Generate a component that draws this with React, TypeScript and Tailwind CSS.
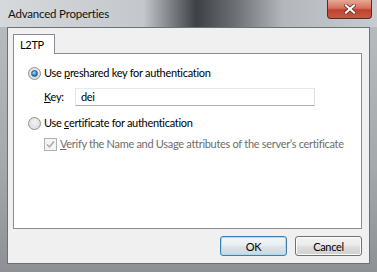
import React from 'react';

const font = { fontFamily: 'Lato, "Noto Sans", sans-serif' };

const Radio: React.FC<{ checked?: boolean }> = ({ checked }) => (
  <span className="w-[13px] h-[13px] rounded-full border border-[#8e8f8f] bg-[radial-gradient(circle_at_50%_40%,#f4f4f4,#d4d4d4)] flex items-center justify-center shrink-0">
    {checked && (
      <span className="w-[7px] h-[7px] rounded-full bg-[radial-gradient(circle_at_40%_35%,#a9dcf6,#2a7fc0_60%,#1b4f86)] border border-[#1e5c94]" />
    )}
  </span>
);

const Checkbox: React.FC = () => (
  <span className="w-[13px] h-[13px] border border-[#b1b1b1] bg-[#f4f4f4] flex items-center justify-center shrink-0">
    <svg width="9" height="9" viewBox="0 0 9 9">
      <path d="M1 4.5 L3.5 7 L8 1.5" fill="none" stroke="#a6a6a6" strokeWidth="1.4" />
    </svg>
  </span>
);

export default function App() {
  return (
    <div
      className="w-[377px] h-[272px] flex flex-col text-[11px] tracking-[-0.3px] text-black bg-[linear-gradient(180deg,#b9bec3_0%,#a4a9ae_60%,#8d9196_100%)] overflow-hidden whitespace-nowrap"
      style={font}
    >
      <div className="h-[27px] flex justify-between items-start bg-[linear-gradient(90deg,#d6d9dc_0%,#c4c8cc_38%,#3d4044_52%,#6a6d71_62%,#b3b7bb_75%,#c8ccd0_100%)]">
        <span className="ml-[8px] mt-[6px] leading-[15px] text-[11.5px] tracking-[-0.2px] text-[#111]">Advanced Properties</span>
        <div className="mr-[5px] w-[45px] h-[19px] rounded-b-[4px] border border-t-0 border-[#5c2a22] bg-[linear-gradient(180deg,#e8a893_0%,#d3715e_45%,#c2412e_55%,#c65a44_100%)] flex items-center justify-center">
          <svg width="12" height="10" viewBox="0 0 12 10">
            <path d="M2 1.5 L10 8.5 M10 1.5 L2 8.5" stroke="#5a2a22" strokeWidth="3.6" strokeLinecap="square" />
            <path d="M2 1.5 L10 8.5 M10 1.5 L2 8.5" stroke="#ffffff" strokeWidth="2.2" strokeLinecap="square" />
          </svg>
        </div>
      </div>
      <div className="flex-1 mx-[7px] mb-[8px] border border-[#6d7175] bg-[#f0f0f0] flex flex-col">
        <div className="mt-[6px] ml-[5px] mr-[7px] flex flex-col">
          <div className="flex">
            <div className="w-[42px] h-[20px] -mb-px relative z-10 bg-white border border-b-0 border-[#898c95] pl-[6px] leading-[19px]">
              L2TP
            </div>
          </div>
          <div className="h-[176px] bg-white border border-[#898c95] flex flex-col">
            <div className="mt-[12px] ml-[14px] flex items-center gap-[3px] h-[15px]">
              <Radio checked />
              <span>
                Use <span className="underline">p</span>reshared key for authentication
              </span>
            </div>
            <div className="mt-[7px] ml-[30px] flex items-center">
              <span className="w-[31px]">
                <span className="underline">K</span>ey:
              </span>
              <div className="w-[240px] h-[18px] border border-[#abadb3] border-t-[#e3e9ef] border-l-[#e2e3ea] border-r-[#dbdfe6] bg-white pl-[5px] leading-[16px]">
                dei
              </div>
            </div>
            <div className="mt-[10px] ml-[14px] flex items-center gap-[3px] h-[15px]">
              <Radio />
              <span>
                Use <span className="underline">c</span>ertificate for authentication
              </span>
            </div>
            <div className="mt-[6px] ml-[30px] flex items-center gap-[3px] h-[15px] text-[#6d6d6d]">
              <Checkbox />
              <span>
                <span className="underline">V</span>erify the Name and Usage attributes of the server’s certificate
              </span>
            </div>
          </div>
        </div>
        <div className="mt-[7px] mr-[7px] flex justify-end gap-[8px]">
          <button className="w-[67px] h-[20px] rounded-[3px] border border-[#3c7fb1] bg-[linear-gradient(180deg,#f2f6f8_0%,#e9eef1_45%,#dbe3e8_55%,#ccd8df_100%)] leading-none shadow-[inset_0_0_0_1px_#a8dcf3]">
            OK
          </button>
          <button className="w-[67px] h-[20px] rounded-[3px] border border-[#707070] bg-[linear-gradient(180deg,#f2f2f2_0%,#ebebeb_45%,#dddddd_55%,#cfcfcf_100%)] leading-none shadow-[inset_0_0_0_1px_#fcfcfc]">
            Cancel
          </button>
        </div>
      </div>
    </div>
  );
}
